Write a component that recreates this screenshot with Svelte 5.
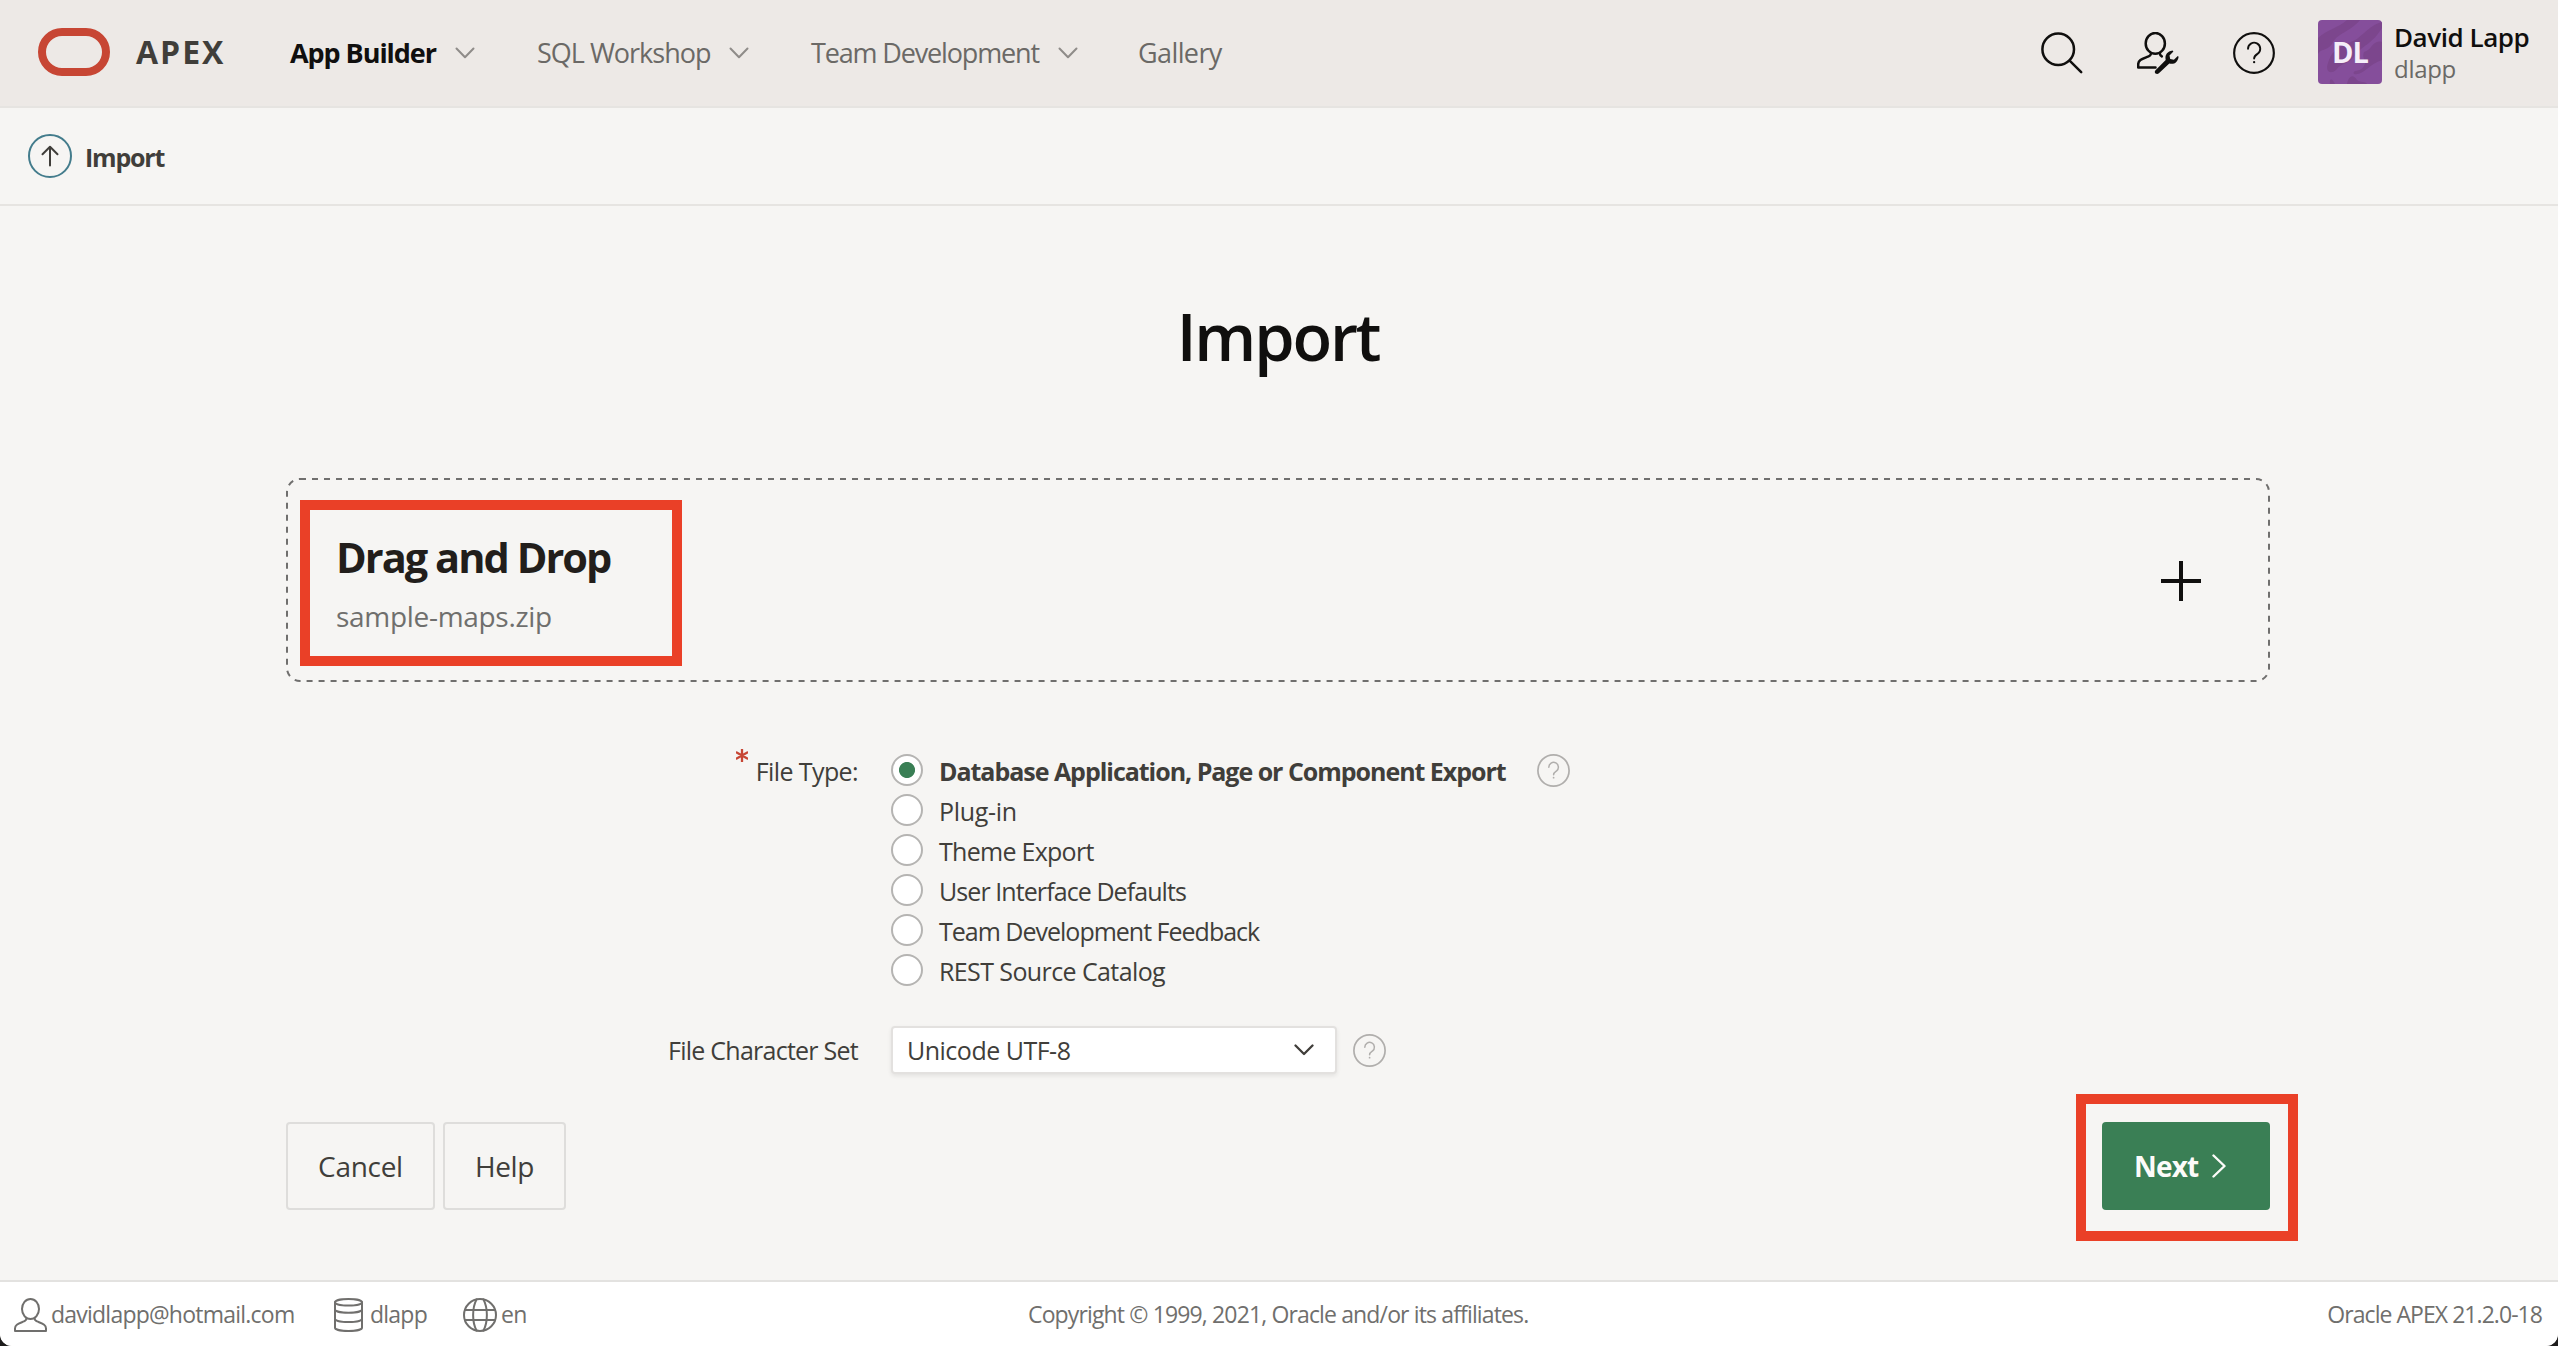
<script>
  const menu = [
    { label: 'App Builder', cls: 'builder', arrow: true },
    { label: 'SQL Workshop', cls: 'sql', arrow: true },
    { label: 'Team Development', cls: 'team', arrow: true },
    { label: 'Gallery', cls: 'gallery', arrow: false }
  ];
  const types = [
    { label: 'Database Application, Page or Component Export', cls: 't0' },
    { label: 'Plug-in', cls: 't1' },
    { label: 'Theme Export', cls: 't2' },
    { label: 'User Interface Defaults', cls: 't3' },
    { label: 'Team Development Feedback', cls: 't4' },
    { label: 'REST Source Catalog', cls: 't5' }
  ];
  let selected = $state(0);
</script>

{#snippet helpIcon(cls)}
  <svg class={cls} viewBox="0 0 33 33" fill="none" stroke="currentColor" stroke-linecap="round">
    <circle cx="16.5" cy="16.5" r="15.6" stroke-width="1.7" />
    <path d="M11.8 13.2a4.8 4.8 0 1 1 7.6 3.9c-1.8 1.2-2.8 1.8-2.8 3.7" stroke-width="1.5" />
    <circle cx="16.6" cy="23.7" r=".9" fill="currentColor" stroke="none" />
  </svg>
{/snippet}

<div class="page">
  <header>
    <div class="logo"></div>
    <div class="brand"><span>APEX</span></div>
    <nav>
      {#each menu as m}
        <div class="item {m.cls}">
          <span>{m.label}</span>
          {#if m.arrow}
            <svg class="chev" viewBox="0 0 20 12"><path d="M1.5 1.5 10 10.3 18.5 1.5" /></svg>
          {/if}
        </div>
      {/each}
    </nav>
    <div class="tools">
      <svg viewBox="0 0 42 42" class="tool">
        <circle cx="17.2" cy="17.2" r="15.8" />
        <path d="M28.6 28.6 40.2 40.2" />
      </svg>
      <svg viewBox="0 0 42 42" class="tool">
        <ellipse cx="18.3" cy="11.4" rx="9.600" ry="10.400" />
        <path d="M14 21.500c-.2 2-1.200 2.500-3 3.200-5.500 2.200-9.800 3.300-9.800 7.500v3.300H18.500M22.800 21.500c.2 1.300.7 2.200 2 2.900" />
        <path class="solid" d="M18.300 38.600 28.700 28c-.8-3.600.3-8.300 6.900-9.400l.8.9-3.900 3.900.7 3.700 3.700.7 3.900-3.900.8.800c-.8 5.600-4.400 8-9.300 6.900L21.900 41.300c-2.300 1.700-5.300-.5-3.600-2.700Z" />
      </svg>
      {@render helpIcon('tool-help')}
    </div>
    <div class="avatar">
      <svg viewBox="0 0 64 64">
        <path d="M0 18C10 9 20 8 29 0h13C32 12 19 13 14 24 8 32 3 28 0 34ZM64 2C50 5 43 20 30 23 18 28 13 33 10 43c-3 8 2 12 8 7 7-9 12-4 20-16C47 24 54 24 64 8Z" />
        <path d="M64 22c-9-3-10 8-18 10-3 7 4 8 0 14-4 7-12 3-10 8 9 2 15-10 28-14ZM12 64c-1-7 3-5 5 0ZM29 64c1-6 5-12 10-4 4 3 8 1 10 4Z" />
      </svg>
      <span>DL</span>
    </div>
    <div class="user">
      <span class="name">David Lapp</span>
      <span class="login">dlapp</span>
    </div>
  </header>

  <div class="crumbs">
    <div class="up">
      <svg viewBox="0 0 18 22"><path d="M9 20.500V2M1.500 9.300 9 1.700l7.500 7.600" /></svg>
    </div>
    <span class="crumb">Import</span>
  </div>

  <main>
    <h1><span>Import</span></h1>

    <div class="drop">
      <svg class="dashes" viewBox="0 0 1984 204"><rect x="1" y="1" width="1982" height="202" rx="13" /></svg>
      <div class="mark file">
        <span class="dd">Drag and Drop</span>
        <span class="zip">sample-maps.zip</span>
      </div>
      <svg class="plus" viewBox="0 0 40 40"><path d="M20 0V40M0 20H40" /></svg>
    </div>

    <div class="row types">
      <div class="label">
        <svg class="star" viewBox="0 0 12 13"><path d="M6 .5v12M.7 3.500l10.600 6M11.300 3.500.7 9.500" /></svg>
        <span class="ft">File Type:</span>
      </div>
      <div class="options">
        {#each types as t, i}
          <label class="option" class:on={selected === i}>
            <input type="radio" name="type" value={i} bind:group={selected} />
            <span class={t.cls}>{t.label}</span>
          </label>
        {/each}
      </div>
      {@render helpIcon('hint')}
    </div>

    <div class="row charset">
      <div class="label"><span class="fcs">File Character Set</span></div>
      <div class="select">
        <span>Unicode UTF-8</span>
        <svg viewBox="0 0 20 12"><path d="M1.500 1.500 10 10 18.500 1.500" /></svg>
      </div>
      {@render helpIcon('hint')}
    </div>

    <div class="actions">
      <button class="cancel"><span>Cancel</span></button>
      <button class="help"><span>Help</span></button>
      <div class="mark nextbox">
        <button class="next">
          <span>Next</span>
          <svg viewBox="0 0 14 24"><path d="M1.500 1.500 12.500 12 1.500 22.500" /></svg>
        </button>
      </div>
    </div>
  </main>

  <footer>
    <div class="f-left">
      <svg class="f-user" viewBox="0 0 33 34">
        <ellipse cx="16.500" cy="11" rx="8.500" ry="10" />
        <path d="M12.500 20c0 2-.8 2.700-2.500 3.400C4.500 25.700 1 26.500 1 30.500V33h31v-2.500c0-4-3.500-4.800-9-7.100-1.700-.7-2.500-1.400-2.500-3.400" />
      </svg>
      <span class="mail">davidlapp@hotmail.com</span>
      <svg class="f-db" viewBox="0 0 29 34">
        <ellipse cx="14.500" cy="4.300" rx="13.500" ry="3.300" />
        <path d="M1 4.300v25.400c0 1.800 6 3.300 13.500 3.300S28 31.500 28 29.700V4.300M1 11.500c0 1.800 6 3.300 13.500 3.300S28 13.300 28 11.500M1 20.800c0 1.800 6 3.300 13.500 3.300S28 22.600 28 20.800" />
      </svg>
      <span class="ws">dlapp</span>
      <svg class="f-globe" viewBox="0 0 34 34">
        <circle cx="17" cy="17" r="16" />
        <path d="M2 12H32M2 22H32M13.500 1.500C9 10 9 24 13.500 32.500M20.500 1.500C25 10 25 24 20.500 32.500" />
      </svg>
      <span class="en">en</span>
    </div>
    <div class="f-mid"><span>Copyright © 1999, 2021, Oracle and/or its affiliates.</span></div>
    <div class="f-right"><span>Oracle APEX 21.2.0-18</span></div>
  </footer>
</div>

<style>
  :global(body) { background: #1d1c1c; }
  .page {
    width: 2558px; height: 1346px; box-sizing: border-box; overflow: hidden;
    display: flex; flex-direction: column;
    background: #f6f5f3; color: #403e3a;
    border-radius: 0 0 12px 12px;
    font-family: "Open Sans", "Noto Sans", sans-serif; font-size: 25px; line-height: 40px;
  }
  .page :global(svg) { display: block; flex: none; fill: none; stroke-linecap: round; stroke-linejoin: round; }
  span { white-space: nowrap; }
  header {
    height: 108px; box-sizing: border-box; flex: none; display: flex; align-items: flex-start;
    background: #ede9e6; border-bottom: 2px solid #e6e4e1; padding-left: 38px;
  }
  .logo { width: 72px; height: 48px; box-sizing: border-box; flex: none; margin-top: 28px; border: 8px solid #c74634; border-radius: 24px; }
  .brand { width: 154px; margin: 32px 0 0 26px; flex: none; font-size: 32px; font-weight: 700; letter-spacing: 2px; }
  nav { display: flex; margin-top: 33px; font-size: 27px; color: #6b6966; }
  .item { display: flex; justify-content: space-between; align-items: center; height: 40px; }
  .builder { width: 185px; margin-right: 62px; color: #100f0e; font-weight: 700; letter-spacing: -1.05px; }
  .sql { width: 212px; margin-right: 62px; letter-spacing: -1px; }
  .team { width: 267px; margin-right: 60px; letter-spacing: -1.150px; }
  .gallery { letter-spacing: -.6px; }
  .chev { width: 20px; height: 12px; stroke: #8f8c89; stroke-width: 2; }
  .tools { display: flex; gap: 54px; margin: 32px 43px 0 auto; color: #100f0e; }
  .tool { width: 42px; height: 42px; stroke: #100f0e; stroke-width: 2.500; }
  .solid { fill: #100f0e; stroke: none; }
  :global(.tool-help) { width: 42px; height: 42px; }
  .avatar { position: relative; width: 64px; height: 64px; flex: none; margin-top: 20px; border-radius: 4px; overflow: hidden; background: #854e9b; }
  .avatar svg { width: 64px; height: 64px; }
  .avatar path { fill: #7c468d; }
  .avatar span { position: absolute; inset: 0; text-align: center; line-height: 64px; font-size: 29px; font-weight: 700; letter-spacing: -1px; color: #f5eef9; }
  .user { width: 164px; flex: none; display: flex; flex-direction: column; margin: 21px 0 0 12px; line-height: 32px; }
  .name { font-size: 26px; font-weight: 600; color: #100f0e; letter-spacing: -.450px; }
  .login { font-size: 24px; color: #6b6966; letter-spacing: -.3px; margin-top: 0; }

  .crumbs { height: 98px; box-sizing: border-box; flex: none; display: flex; align-items: center; padding: 0 28px 0; border-bottom: 2px solid #e6e4e1; }
  .up { width: 44px; height: 44px; box-sizing: border-box; display: grid; place-items: center; border: 2px solid #437c8c; border-radius: 50%; }
  .up svg { width: 18px; height: 22px; stroke: #403e3a; stroke-width: 2; }
  .crumb { margin: 1px 0 0 13px; font-weight: 700; font-size: 25px; letter-spacing: -1.200px; }

  main { flex: none; height: 1074px; width: 1984px; margin: 0 auto 0 286px; display: flex; flex-direction: column; }
  h1 { margin: 80px 0 0; height: 100px; line-height: 100px; text-align: center; font-size: 65px; font-weight: 600; color: #100f0e; letter-spacing: -2.200px; }
  .drop { position: relative; box-sizing: border-box; width: 1984px; height: 204px; margin-top: 92px; padding: 22px 69px 0 14px; display: flex; justify-content: space-between; }
  .dashes { position: absolute; inset: 0; width: 1984px; height: 204px; stroke: #706f6e; stroke-width: 2; stroke-dasharray: 6 6; stroke-linecap: butt !important; }
  .mark { box-sizing: border-box; border: 10px solid #ea4027; }
  .file { width: 382px; height: 166px; padding: 17px 0 0 26px; display: flex; flex-direction: column; }
  .dd { font-size: 41.500px; font-weight: 700; line-height: 60px; color: #221e1b; letter-spacing: -1.950px; }
  .zip { font-size: 28px; line-height: 40px; margin-top: 9px; color: #6f6f6d; letter-spacing: -.3px; }
  .plus { width: 40px; height: 40px; margin-top: 61px; stroke: #100f0e; stroke-width: 4; stroke-linecap: butt !important; }
  .row { display: flex; }
  .types { margin-top: 70px; height: 240px; }
  .label { width: 572px; margin-right: 33px; flex: none; display: flex; justify-content: flex-end; line-height: 38px; letter-spacing: -.6px; }
  .fcs { letter-spacing: -.750px; }
  .star { width: 12px; height: 13px; margin: -3px 8px 0 0; stroke: #c74634; stroke-width: 2.300; }
  .options { display: flex; flex-direction: column; width: 646px; }
  .option { display: flex; align-items: flex-start; height: 40px; line-height: 38px; }
  .on { font-weight: 700; }
  .t0 { letter-spacing: -1.030px; }
  .t1 { letter-spacing: -.3px; }
  .t2 { letter-spacing: -.720px; }
  .t3 { letter-spacing: -.920px; }
  .t4 { letter-spacing: -1px; }
  .t5 { letter-spacing: -.6px; }
  input { appearance: none; width: 32px; height: 32px; box-sizing: border-box; margin: 2px 16px 0 0; flex: none; border: 2px solid #b5b4b2; border-radius: 50%; background: #fff; }
  input:checked { background: radial-gradient(circle, #3a7f55 7.600px, #fff 8.400px); }
  .row :global(.hint) { width: 33px; height: 33px; margin-top: 2px; color: #b0aeac; }
  .charset { margin-top: 34px; height: 48px; }
  .charset .label { line-height: 48px; }
  .select { width: 446px; height: 48px; box-sizing: border-box; margin-right: 16px; padding: 0 21px 0 14px; display: flex; align-items: center; justify-content: space-between; background: #fff; border: 2px solid #e3e1df; border-radius: 4px; box-shadow: 0 2px 4px rgba(0,0,0,.08); letter-spacing: -.5px; }
  .select svg { width: 20px; height: 12px; stroke: #403e3a; stroke-width: 2.300; margin-top: -1px; }
  .charset :global(.hint) { margin-top: 8px; }
  .actions { display: flex; margin-top: 20px; height: 147px; }
  button { font: inherit; color: inherit; height: 88px; box-sizing: border-box; margin: 0; padding: 0; background: #f6f5f3; border: 2px solid #dedddb; border-radius: 4px; font-size: 28px; }
  .cancel { width: 149px; margin-top: 28px; letter-spacing: -.3px; }
  .help { width: 123px; margin: 28px 0 0 8px; letter-spacing: -.4px; }
  .nextbox { flex: none; width: 222px; height: 147px; margin: 0 -28px 0 auto; padding: 18px 18px 0 16px; }
  .next { width: 168px; display: flex; align-items: center; padding-left: 32px; background: #3a7f55; border: 0; color: #fcfbf9; font-weight: 700; letter-spacing: -.8px; }
  .next svg { width: 14px; height: 24px; margin-left: auto; margin-right: 44px; stroke: #fcfbf9; stroke-width: 2.400; }

  footer { flex: none; height: 66px; box-sizing: border-box; border-top: 2px solid #e3e2e0; background: #fff; color: #706f6d; display: flex; font-size: 23px; line-height: 64px; border-radius: 0 0 12px 12px; letter-spacing: -.770px; }
  footer svg { stroke: #706f6d; stroke-width: 2; }
  .f-left { width: 1028px; display: flex; padding: 0; }
  .f-left svg { margin-top: 16px; height: 34px; }
  .f-user { width: 33px; margin-left: 14px; }
  .f-db { width: 29px; }
  .f-globe { width: 34px; }
  .mail { width: 283px; margin-left: 4px; }
  .ws { width: 93px; margin-left: 7px; }
  .en { margin-left: 4px; }
  .f-mid { letter-spacing: -.860px; }
  .f-right { margin-left: auto; margin-right: 16px; letter-spacing: -.950px; }
</style>
